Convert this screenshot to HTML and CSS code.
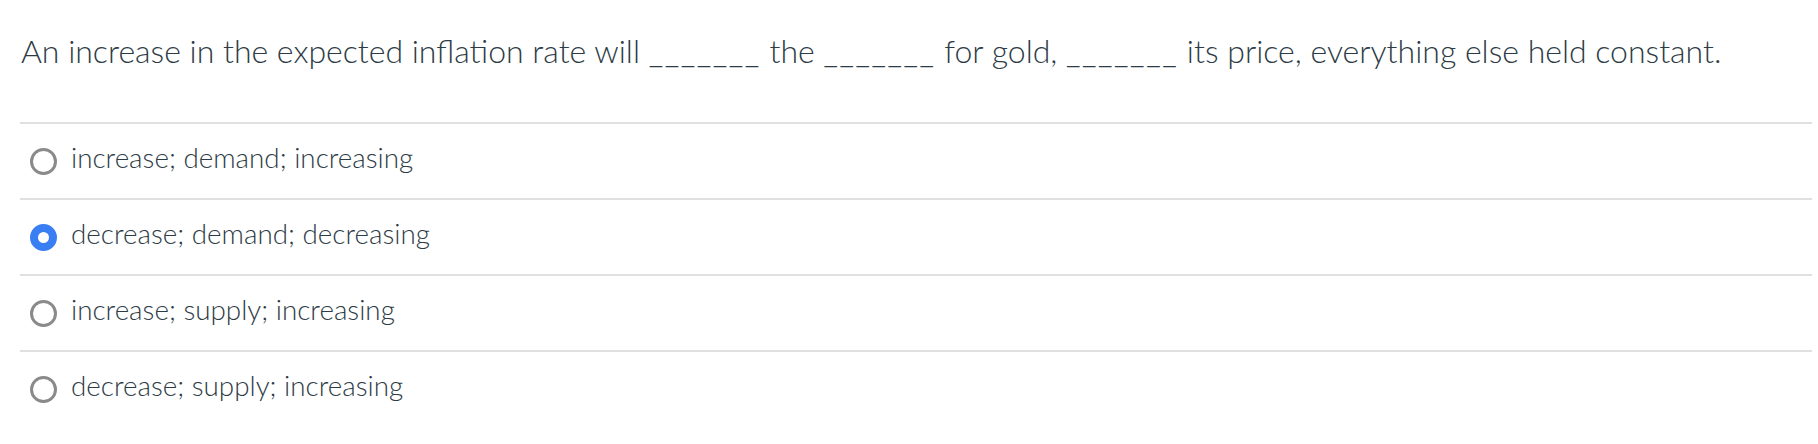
FILE: index.html
```html
<!DOCTYPE html>
<html>
<head>
<meta charset="utf-8">
<link rel="stylesheet" href="styles.css">
</head>
<body>
<div class="quiz">
  <p class="question">An increase in the expected inflation rate will <span class="blank">_______</span> the <span class="blank">_______</span> for gold, <span class="blank">_______</span> its price, everything else held constant.</p>
  <div class="answers">
    <label class="answer"><span class="radio"></span><span class="text">increase; demand; increasing</span></label>
    <label class="answer"><span class="radio checked"></span><span class="text">decrease; demand; decreasing</span></label>
    <label class="answer"><span class="radio"></span><span class="text">increase; supply; increasing</span></label>
    <label class="answer"><span class="radio"></span><span class="text">decrease; supply; increasing</span></label>
  </div>
</div>
</body>
</html>
```
FILE: styles.css
```css
html, body {
  margin: 0;
  padding: 0;
  background: #ffffff;
}
body {
  font-family: Lato, "Liberation Sans", sans-serif;
  color: #2d3b45;
}
.quiz {
  margin: 0 6px 0 20px;
}
.question {
  margin: 0;
  padding: 31px 0 0 1px;
  height: 122px;
  box-sizing: border-box;
  font-size: 32px;
  font-weight: 300;
  line-height: 40px;
  white-space: nowrap;
}
.blank {
  letter-spacing: 1.6px;
}
.answers {
  display: flex;
  flex-direction: column;
}
.answer {
  display: flex;
  align-items: center;
  gap: 14px;
  height: 76px;
  box-sizing: border-box;
  border-top: 2px solid #e0e0e0;
  padding: 0 0 0 10px;
  font-size: 27.8px;
  font-weight: 300;
}
.text {
  margin-bottom: 7px;
}
.radio {
  width: 27px;
  height: 27px;
  box-sizing: border-box;
  border: 3px solid #8a8a8a;
  border-radius: 50%;
  flex: none;
}
.radio.checked {
  border: 8px solid #3a7ef4;
}
```
